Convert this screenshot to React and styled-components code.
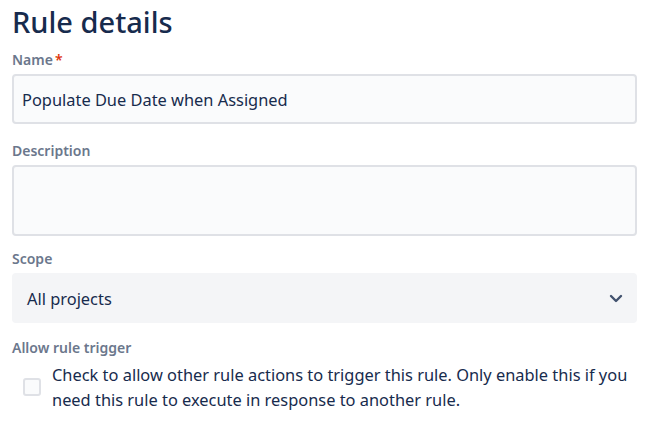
import React from 'react';
import styled, { createGlobalStyle } from 'styled-components';

const GlobalStyle = createGlobalStyle`
  body {
    margin: 0;
    background: #ffffff;
    font-family: "Segoe UI", "Noto Sans", "Liberation Sans", sans-serif;
    color: #172b4d;
  }
`;

const Page = styled.div`
  padding: 0 10px 0 12px;
  display: flex;
  flex-direction: column;
`;

const Title = styled.h1`
  margin: 3px 0 0;
  font-size: 29px;
  line-height: 38px;
  font-weight: 500;
  color: #172b4d;
`;

const Field = styled.div`
  display: flex;
  flex-direction: column;
  margin-top: ${p => p.$gap || 18}px;
`;

const Label = styled.label`
  font-size: 14px;
  line-height: 18px;
  font-weight: 600;
  color: #6b778c;
  margin-bottom: 5px;
`;

const Required = styled.span`
  color: #de350b;
  margin-left: 2px;
`;

const TextBox = styled.div`
  box-sizing: border-box;
  height: ${p => p.$height}px;
  border: 2px solid #dfe1e6;
  border-radius: 4px;
  background: #fafbfc;
  padding: 13px 8px 9px;
  font-size: 16.4px;
  line-height: 22px;
  color: #172b4d;
`;

const Select = styled.div`
  box-sizing: border-box;
  height: 50px;
  border-radius: 4px;
  background: #f4f5f7;
  padding: 0 14px 0 15px;
  display: flex;
  align-items: center;
  justify-content: space-between;
  font-size: 16.4px;
  color: #172b4d;
`;

const CheckRow = styled.div`
  display: flex;
  align-items: center;
  gap: 11px;
  padding-left: 11px;
`;

const Box = styled.span`
  box-sizing: border-box;
  flex: none;
  width: 18px;
  height: 18px;
  border: 2px solid #dfe1e6;
  border-radius: 3px;
  background: #fafbfc;
`;

const CheckText = styled.div`
  font-size: 16.4px;
  line-height: 25px;
  color: #172b4d;
`;

export default function App() {
  return (
    <>
      <GlobalStyle />
      <Page>
        <Title>Rule details</Title>
        <Field $gap={10}>
          <Label>Name<Required>*</Required></Label>
          <TextBox $height={50}>Populate Due Date when Assigned</TextBox>
        </Field>
        <Field>
          <Label>Description</Label>
          <TextBox $height={71} />
        </Field>
        <Field $gap={14}>
          <Label>Scope</Label>
          <Select>
            All projects
            <svg width="14" height="9" viewBox="0 0 14 9">
              <path d="M2 2l5 5 5-5" fill="none" stroke="#42526e" strokeWidth="2.4" strokeLinecap="round" strokeLinejoin="round" />
            </svg>
          </Select>
        </Field>
        <Field $gap={16}>
          <Label>Allow rule trigger</Label>
          <CheckRow>
            <Box />
            <CheckText>
              Check to allow other rule actions to trigger this rule. Only enable this if you need this rule to execute in response to another rule.
            </CheckText>
          </CheckRow>
        </Field>
      </Page>
    </>
  );
}
